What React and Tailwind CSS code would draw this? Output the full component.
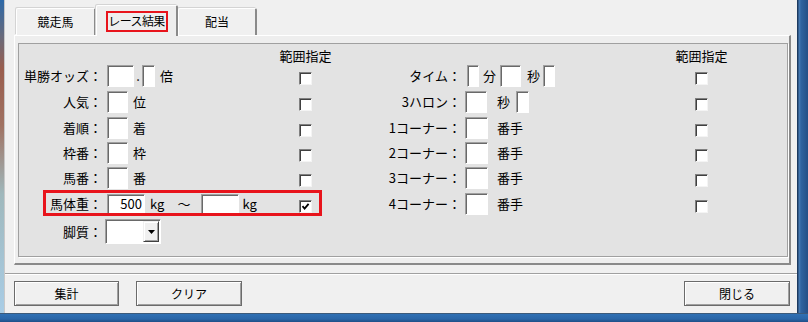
const sunken =
  "bg-white border border-t-[#a0a0a0] border-l-[#a0a0a0] border-r-white border-b-white shadow-[inset_1px_1px_0_#696969]";
const cols = "grid grid-cols-[83px_197px_13px_149px_234px_13px] items-center";
const txt = "text-[13px] leading-[16px] whitespace-nowrap";

function Box({ className = "", children }) {
  return <div className={`${sunken} h-[22px] shrink-0 ${className}`}>{children}</div>;
}

function Check({ checked }) {
  return (
    <div className="mt-[5px] w-[13px] h-[13px] bg-white border border-t-[#808080] border-l-[#808080] border-r-[#f4f4f4] border-b-[#f4f4f4] shadow-[inset_1px_1px_0_#404040] flex items-center justify-center">
      {checked && (
        <svg width="9" height="9" viewBox="0 0 9 9">
          <path d="M1.5 4.2 L3.6 6.6 L7.6 1.8" fill="none" stroke="#000" strokeWidth="1.8" />
        </svg>
      )}
    </div>
  );
}

function Label({ children }) {
  return <div className={`flex justify-end ${txt}`}>{children}</div>;
}

function Tab({ className = "", children }) {
  return (
    <div
      className={`flex items-center justify-center text-[12px] leading-[16px] rounded-t-[2px] border-t border-l border-r-2 border-t-white border-l-white border-r-[#8a8a8a] shadow-[-1px_-1px_0_#d4d4d4] ${className}`}
    >
      {children}
    </div>
  );
}

function Button({ className = "", children }) {
  return (
    <div
      className={`h-[25px] flex items-center justify-center text-[12px] leading-[16px] bg-[#f0f0f0] border border-[#6b6b6b] shadow-[inset_1px_1px_0_#ffffff,inset_-1px_-1px_0_#a0a0a0] ${className}`}
    >
      {children}
    </div>
  );
}

export default function App() {
  return (
    <div className="w-[808px] h-[322px] flex flex-col font-['Noto_Sans_CJK_JP','Noto_Sans',sans-serif] text-black overflow-hidden">
      <div className="flex h-[313px]">
        <div className="w-[4px] bg-[linear-gradient(to_bottom,#2e6aa8_0%,#6a6a7a_12%,#9a5e4e_22%,#a07262_40%,#9fb8bc_62%,#a9cde6_100%)]" />
        <div className="flex-1 flex flex-col bg-[#f0f0f0] border-l border-l-[#c8c8c8]">
          {/* tabs */}
          <div className="h-[35px] flex items-end pl-[11px]">
            <Tab className="w-[80px] h-[27px] bg-[#f0f0f0]">競走馬</Tab>
            <Tab className="w-[82px] h-[31px] -mb-[1px] relative z-10 bg-[#eeeeee]">
              <span className="w-[62px] h-[21px] flex items-center justify-center border-2 border-[#e8141c] tracking-[-0.6px] text-[12px]">
                レース結果
              </span>
            </Tab>
            <Tab className="w-[79px] h-[27px] bg-[#f0f0f0]">配当</Tab>
          </div>

          {/* tab page */}
          <div className="ml-[9px] w-[777px] h-[230px] bg-[#eeeeee] border-t border-l border-t-white border-l-white border-r-2 border-b-2 border-r-[#8a8a8a] border-b-[#8a8a8a] pt-[7px] pl-[3px]">
            <div className="w-[770px] h-[214px] bg-[#e3e3e3] border border-[#a0a0a0] shadow-[1px_1px_0_#ffffff] flex flex-col pt-[3px]">
              <div className={`${cols} h-[17px]`}>
                <div />
                <div />
                <div className={`flex justify-center ${txt}`}>範囲指定</div>
                <div />
                <div />
                <div className={`flex justify-center ${txt}`}>範囲指定</div>
              </div>

              {/* row 1 */}
              <div className={`${cols} h-[22px] mt-[1px]`}>
                <Label>単勝オッズ：</Label>
                <div className="flex items-center pl-[5px]">
                  <Box className="w-[27px]" />
                  <span className={`w-[8px] text-center ${txt}`}>.</span>
                  <Box className="w-[13px]" />
                  <span className={`ml-[5px] ${txt}`}>倍</span>
                </div>
                <Check />
                <Label>タイム：</Label>
                <div className="flex items-center">
                  <Box className="ml-[6px] w-[12px]" />
                  <span className={`ml-[4px] ${txt}`}>分</span>
                  <Box className="ml-[4px] w-[21px]" />
                  <span className={`ml-[6px] ${txt}`}>秒</span>
                  <Box className="ml-[3px] w-[12px]" />
                </div>
                <Check />
              </div>

              {/* row 2 */}
              <div className={`${cols} h-[22px] mt-[4px]`}>
                <Label>人気：</Label>
                <div className="flex items-center pl-[5px]">
                  <Box className="w-[21px]" />
                  <span className={`ml-[5px] ${txt}`}>位</span>
                </div>
                <Check />
                <Label>3ハロン：</Label>
                <div className="flex items-center">
                  <Box className="ml-[4px] w-[22px]" />
                  <span className={`ml-[10px] ${txt}`}>秒</span>
                  <Box className="ml-[6px] w-[13px]" />
                </div>
                <Check />
              </div>

              {/* row 3 */}
              <div className={`${cols} h-[22px] mt-[4px]`}>
                <Label>着順：</Label>
                <div className="flex items-center pl-[5px]">
                  <Box className="w-[21px]" />
                  <span className={`ml-[5px] ${txt}`}>着</span>
                </div>
                <Check />
                <Label>1コーナー：</Label>
                <div className="flex items-center">
                  <Box className="ml-[4px] w-[23px]" />
                  <span className={`ml-[9px] ${txt}`}>番手</span>
                </div>
                <Check />
              </div>

              {/* row 4 */}
              <div className={`${cols} h-[22px] mt-[3px]`}>
                <Label>枠番：</Label>
                <div className="flex items-center pl-[5px]">
                  <Box className="w-[21px]" />
                  <span className={`ml-[5px] ${txt}`}>枠</span>
                </div>
                <Check />
                <Label>2コーナー：</Label>
                <div className="flex items-center">
                  <Box className="ml-[4px] w-[23px]" />
                  <span className={`ml-[9px] ${txt}`}>番手</span>
                </div>
                <Check />
              </div>

              {/* row 5 */}
              <div className={`${cols} h-[22px] mt-[3px]`}>
                <Label>馬番：</Label>
                <div className="flex items-center pl-[5px]">
                  <Box className="w-[21px]" />
                  <span className={`ml-[5px] ${txt}`}>番</span>
                </div>
                <Check />
                <Label>3コーナー：</Label>
                <div className="flex items-center">
                  <Box className="ml-[4px] w-[23px]" />
                  <span className={`ml-[9px] ${txt}`}>番手</span>
                </div>
                <Check />
              </div>

              {/* row 6 */}
              <div className={`${cols} h-[21px] mt-[4px] relative`}>
                <Label>馬体重：</Label>
                <div className="flex items-center pl-[5px]">
                  <Box className="w-[38px] !h-[20px] flex items-center justify-end pr-[2px]">
                    <span className={txt}>500</span>
                  </Box>
                  <span className={`ml-[5px] ${txt}`}>kg</span>
                  <span className={`ml-[13px] ${txt}`}>～</span>
                  <Box className="ml-[11px] w-[38px] !h-[20px]" />
                  <span className={`ml-[3px] ${txt}`}>kg</span>
                </div>
                <Check checked />
                <Label>4コーナー：</Label>
                <div className="flex items-center">
                  <Box className="ml-[4px] w-[23px]" />
                  <span className={`ml-[9px] ${txt}`}>番手</span>
                </div>
                <Check />
                <div className="absolute left-[24px] top-[-3px] w-[279px] h-[26px] border-[3px] border-[#e8141c] pointer-events-none" />
              </div>

              {/* row 7 */}
              <div className={`${cols} h-[25px] mt-[5px]`}>
                <Label>脚質：</Label>
                <div className="flex items-center pl-[3px]">
                  <div className={`${sunken} w-[56px] h-[25px] flex justify-end items-center pr-[1px]`}>
                    <div className="w-[16px] h-[21px] bg-[#f0f0f0] border border-t-[#f0f0f0] border-l-[#f0f0f0] border-r-[#404040] border-b-[#404040] shadow-[inset_1px_1px_0_#ffffff,inset_-1px_-1px_0_#a0a0a0] flex items-center justify-center">
                      <svg width="7" height="4" viewBox="0 0 7 4">
                        <path d="M0 0 H7 L3.5 4 Z" fill="#000" />
                      </svg>
                    </div>
                  </div>
                </div>
                <div />
                <div />
                <div />
                <div />
              </div>
            </div>
          </div>

          {/* divider */}
          <div className="mt-[8px] h-[2px] border-t border-t-[#a0a0a0] border-b border-b-white" />

          {/* buttons */}
          <div className="mt-[6px] flex pl-[9px] pr-[7px]">
            <Button className="w-[105px]">集計</Button>
            <Button className="ml-[17px] w-[106px]">クリア</Button>
            <div className="flex-1" />
            <Button className="w-[106px]">閉じる</Button>
          </div>
        </div>
        <div className="w-[11px] bg-[linear-gradient(to_right,#1c3a60_0px,#1c3a60_1px,#4a7fb8_2px,#2f63a0_4px,#244f86_100%)]" />
      </div>
      <div className="h-[9px] border-t border-t-[#3c5a7a] bg-[linear-gradient(to_bottom,#2f70b4_0%,#2a66a8_60%,#1f4f88_100%)]" />
    </div>
  );
}
